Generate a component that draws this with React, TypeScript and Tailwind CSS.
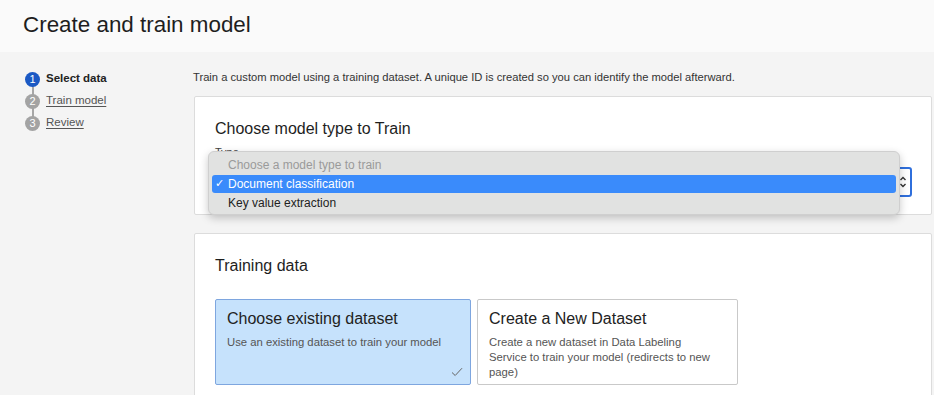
import React from "react";

const font = { fontFamily: '"Liberation Sans", Arial, Helvetica, sans-serif' };

function Step({ n, label, active, last }: { n: number; label: string; active?: boolean; last?: boolean }) {
  return (
    <div className="relative flex items-center h-[22px]">
      {!last && <div className="absolute left-[6.5px] top-[11px] h-[22px] w-[2px] bg-[#a6a6a6]" />}
      <div
        className={
          "relative z-10 w-[15px] h-[15px] rounded-full flex items-center justify-center text-[11px] text-white " +
          (active ? "bg-[#1b59c4]" : "bg-[#a3a3a3]")
        }
      >
        {n}
      </div>
      <span
        className={
          "ml-[6px] text-[11.5px] " +
          (active ? "font-bold text-[#222]" : "underline text-[#555] underline-offset-2")
        }
      >
        {label}
      </span>
    </div>
  );
}

export default function App() {
  return (
    <div className="min-h-screen bg-[#f4f4f4] text-[#222] overflow-hidden" style={font}>
      <div className="h-[52px] bg-[#fafafa] flex items-center pl-[23px] pb-[3px]">
        <h1 className="text-[22.4px] text-[#1e1e1e]">Create and train model</h1>
      </div>
      <div className="flex">
        <div className="w-[194px] shrink-0 pl-[25px] pt-[16px]">
          <Step n={1} label="Select data" active />
          <Step n={2} label="Train model" />
          <Step n={3} label="Review" last />
        </div>
        <div className="flex-1 pr-[2px] pt-[17px]">
          <p className="text-[11.2px] text-[#333] h-[27px] -ml-[1px]">
            Train a custom model using a training dataset. A unique ID is created so you can identify the model afterward.
          </p>
          <div className="relative bg-white border border-[#dcdcdc] rounded-[2px] pl-[20px] pr-[19px] pt-[22px] pb-[17px]">
            <h2 className="text-[16px] text-[#1e1e1e] leading-[20px]">Choose model type to Train</h2>
            <div className="text-[11px] text-[#444] mt-[6px] leading-[14px]">Type</div>
            <div className="mt-[8px] h-[30px] border-2 border-[#2f6fdc] rounded-[3px] flex items-center justify-end pr-[3px]">
              <svg width="8" height="14" viewBox="0 0 8 14" fill="none" stroke="#333" strokeWidth="1.4">
                <path d="M1.5 5 L4 2.5 L6.5 5" />
                <path d="M1.5 9 L4 11.5 L6.5 9" />
              </svg>
            </div>
            <div className="absolute left-[13px] top-[54px] w-[692px] h-[64px] bg-[#e1e2e1] rounded-[6px] border border-[#cfcfcf] shadow-[0_3px_8px_rgba(0,0,0,0.22)] px-[3px] pt-[3px] text-[12px]">
              <div className="h-[19px] flex items-center pl-[16px] text-[#9a9a9a]">Choose a model type to train</div>
              <div className="h-[18px] my-[0.5px] flex items-center rounded-[3px] bg-[#3a8bfb] text-white">
                <span className="w-[16px] pl-[3px] text-[11px]">✓</span>
                <span>Document classification</span>
              </div>
              <div className="h-[19px] flex items-center pl-[16px] text-[#222]">Key value extraction</div>
            </div>
          </div>
          <div className="mt-[18px] bg-white border border-[#dcdcdc] rounded-[2px] pl-[20px] pr-[19px] pt-[22px] pb-[20px]">
            <h2 className="text-[16px] text-[#1e1e1e] leading-[20px]">Training data</h2>
            <div className="mt-[23px] flex gap-[6px]">
              <div className="relative w-[256px] h-[86px] bg-[#c6e2fc] border border-[#7ea6df] rounded-[2px] px-[11px] pt-[9px]">
                <div className="text-[16px] text-[#222] leading-[20px]">Choose existing dataset</div>
                <div className="text-[11.3px] text-[#555] mt-[6px] leading-[15px]">Use an existing dataset to train your model</div>
                <svg className="absolute right-[7px] bottom-[7px]" width="12" height="10" viewBox="0 0 12 10" fill="none" stroke="#666" strokeWidth="1">
                  <path d="M1 5.5 L4.2 8.5 L11 1.2" />
                </svg>
              </div>
              <div className="w-[261px] h-[86px] bg-white border border-[#c9c9c9] rounded-[2px] pl-[11px] pr-[24px] pt-[9px]">
                <div className="text-[16px] text-[#222] leading-[20px]">Create a New Dataset</div>
                <div className="text-[11.3px] text-[#555] mt-[6px] leading-[15px]">
                  Create a new dataset in Data Labeling Service to train your model (redirects to new page)
                </div>
              </div>
            </div>
          </div>
        </div>
      </div>
    </div>
  );
}
